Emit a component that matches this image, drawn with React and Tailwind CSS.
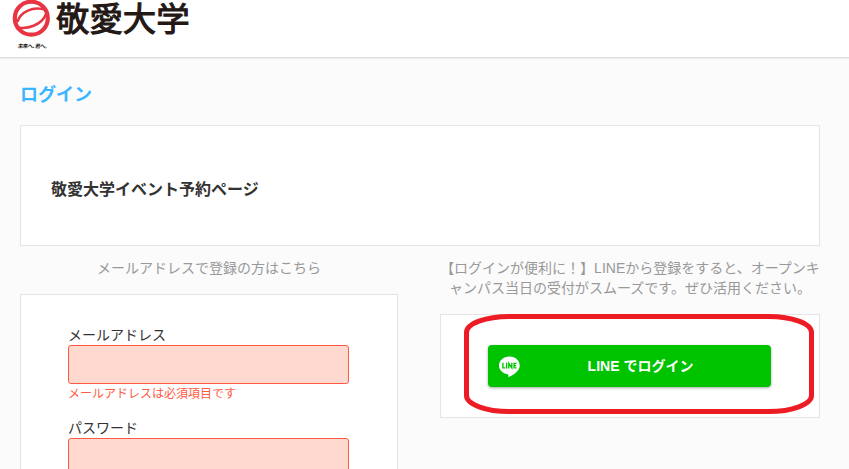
function EmblemMark() {
  return (
    <svg width="38" height="38" viewBox="0 0 38 38" fill="none" className="block">
      <circle cx="19.300" cy="18.200" r="16.500" stroke="#e83543" strokeWidth="4.200" />
      <path d="M5.500 22C8 12 21 5.500 34 10" stroke="#e83543" strokeWidth="2.500" />
      <path d="M4 27C15 30 30 25 34 14" stroke="#e83543" strokeWidth="2.500" />
    </svg>
  );
}

function Header() {
  return (
    <header className="h-[58px] border-b border-[#dedede] bg-white pl-[12px] shadow-[0_1px_1px_#eeeeee]">
      <div className="flex h-[38px] gap-[6px]">
        <EmblemMark />
        <span className="pt-px text-[33.4px] leading-[38px] text-[#231815] [-webkit-text-stroke:1.1px_#231815] [stroke-linejoin:round]">敬愛大学</span>
      </div>
      <div className="ml-[6px] mt-[4px] flex h-[8px] w-[31px] items-center">
        <span className="inline-block origin-left scale-50 -skew-x-6 whitespace-nowrap text-[10.5px] leading-[8px] font-bold tracking-[-0.9px] text-[#231815]">未来へ<span className="-mr-[4px]">、</span>君へ。</span>
      </div>
    </header>
  );
}

function Field({ label, error }) {
  return (
    <div className="h-[93px]">
      <label className="block h-[20px] text-[14px] leading-[20px] text-[#333]">{label}</label>
      <div className="h-[39px] rounded-[3px] border border-[#ff5a43] bg-[#ffd8cf]" />
      {error && <p className="text-[12px] leading-[20px] text-[#ff5a43]">{error}</p>}
    </div>
  );
}

function LineIcon() {
  return (
    <svg width="22" height="22" viewBox="0 0 22 22" className="mt-px shrink-0">
      <path d="M11.500 0.500C5.500 0.500 1 4.500 1 9.500C1 14 4.700 17.500 9.500 18.300C10.500 18.500 10.600 19.500 10.400 21.200C15.500 19 21.700 15 21.700 9.500C21.700 4.500 17.500 .5 11.500 .5Z" fill="#fff" />
      <path d="M4.900 6.800v5h2.500M8.600 6.800v5.600M10.800 12.400V7.500l3 4.400V6.800M18.500 7.400h-2.400v4.400h2.400M16.100 9.600h2.200" fill="none" stroke="#00c300" strokeWidth="1.350" />
    </svg>
  );
}

export default function App() {
  return (
    <div className="h-[469px] w-[849px] overflow-hidden bg-[#fbfbfb] font-['Liberation_Sans','Noto_Sans_CJK_JP',sans-serif]">
      <Header />
      <main className="pl-[20px] pr-[29px]">
        <h1 className="flex h-[67px] items-center pt-[8px] text-[18px] font-bold text-[#38b6ff]">ログイン</h1>
        <section className="flex h-[121px] items-center border border-[#e5e5e5] bg-white pl-[30px] pt-[8px]">
          <h2 className="text-[16px] leading-[24px] font-bold text-[#333]">敬愛大学イベント予約ページ</h2>
        </section>
        <div className="flex items-start justify-between pt-[12px]">
          <section className="w-[378px]">
            <p className="mb-[16px] text-center text-[14px] leading-[20px] text-[#999]">メールアドレスで登録の方はこちら</p>
            <div className="h-[220px] border border-[#e5e5e5] bg-white pl-[47px] pr-[48px] pt-[30px]">
              <Field label="メールアドレス" error="メールアドレスは必須項目です" />
              <Field label="パスワード" />
            </div>
          </section>
          <section className="w-[380px]">
            <p className="mb-[16px] whitespace-nowrap text-center text-[14px] leading-[20px] text-[#999]">
              【ログインが便利に！】LINEから登録をすると、オープンキ
              <br />
              ャンパス当日の受付がスムーズです。ぜひ活用ください。
            </p>
            <div className="relative h-[104px] border border-[#e5e5e5] bg-white px-[47px] pt-[30px]">
              <button className="flex h-[42px] w-[283px] items-center rounded-[4px] bg-[#00c300] pl-[10px] text-white shadow-[0_1px_3px_rgba(0,0,0,0.35)]">
                <LineIcon />
                <span className="flex-1 pr-[10px] text-center text-[14px] leading-[20px] font-bold">LINE でログイン</span>
              </button>
              <svg className="pointer-events-none absolute -top-px left-[23px]" width="350" height="100" viewBox="0 0 350 100" fill="none">
                <rect x="2.500" y="2.500" width="345" height="95" rx="43" ry="16" stroke="#ed1c24" strokeWidth="5" />
              </svg>
            </div>
          </section>
        </div>
      </main>
    </div>
  );
}
